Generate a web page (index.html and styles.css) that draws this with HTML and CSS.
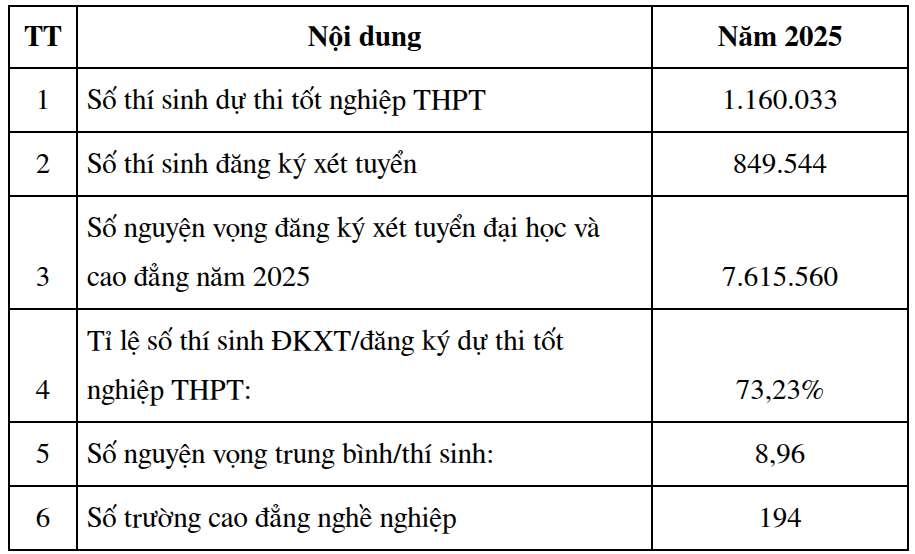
FILE: index.html
```html
<!DOCTYPE html>
<html lang="vi">
<head>
<meta charset="utf-8">
<link rel="stylesheet" href="styles.css">
</head>
<body>
<table class="stats">
  <colgroup>
    <col class="c-tt">
    <col class="c-content">
    <col class="c-year">
  </colgroup>
  <thead>
    <tr>
      <th>TT</th>
      <th>Nội dung</th>
      <th>Năm 2025</th>
    </tr>
  </thead>
  <tbody>
    <tr>
      <td class="num">1</td>
      <td class="text">Số thí sinh dự thi tốt nghiệp THPT</td>
      <td class="num">1.160.033</td>
    </tr>
    <tr>
      <td class="num">2</td>
      <td class="text">Số thí sinh đăng ký xét tuyển</td>
      <td class="num">849.544</td>
    </tr>
    <tr>
      <td class="num">3</td>
      <td class="text">Số nguyện vọng đăng ký xét tuyển đại học và<br>cao đẳng năm 2025</td>
      <td class="num">7.615.560</td>
    </tr>
    <tr>
      <td class="num">4</td>
      <td class="text">Tỉ lệ số thí sinh ĐKXT/đăng ký dự thi tốt<br>nghiệp THPT:</td>
      <td class="num">73,23%</td>
    </tr>
    <tr>
      <td class="num">5</td>
      <td class="text">Số nguyện vọng trung bình/thí sinh:</td>
      <td class="num">8,96</td>
    </tr>
    <tr>
      <td class="num">6</td>
      <td class="text">Số trường cao đẳng nghề nghiệp</td>
      <td class="num">194</td>
    </tr>
  </tbody>
</table>
</body>
</html>
```
FILE: styles.css
```css
html, body {
  margin: 0;
  background: #ffffff;
}
body {
  padding: 5px 8px 0 8px;
  font-family: "Nimbus Roman", "FreeSerif", "Noto Serif", "DejaVu Serif", serif;
  font-size: 29px;
  color: #000000;
}
.stats {
  border-collapse: collapse;
  width: 899px;
  table-layout: fixed;
}
.c-tt { width: 68px; }
.c-content { width: 575px; }
.c-year { width: 256px; }
.stats th,
.stats td {
  border: 2px solid #000000;
  padding: 7px 9px 6px 9px;
  line-height: 49px;
  vertical-align: bottom;
  font-family: "Nimbus Roman", "FreeSerif", "Noto Serif", "DejaVu Serif", serif;
}
.stats th {
  padding: 6px 9px 5px 9px;
  font-weight: bold;
  text-align: center;
}
.stats td.num {
  text-align: center;
}
.stats td.text {
  text-align: left;
}
```
